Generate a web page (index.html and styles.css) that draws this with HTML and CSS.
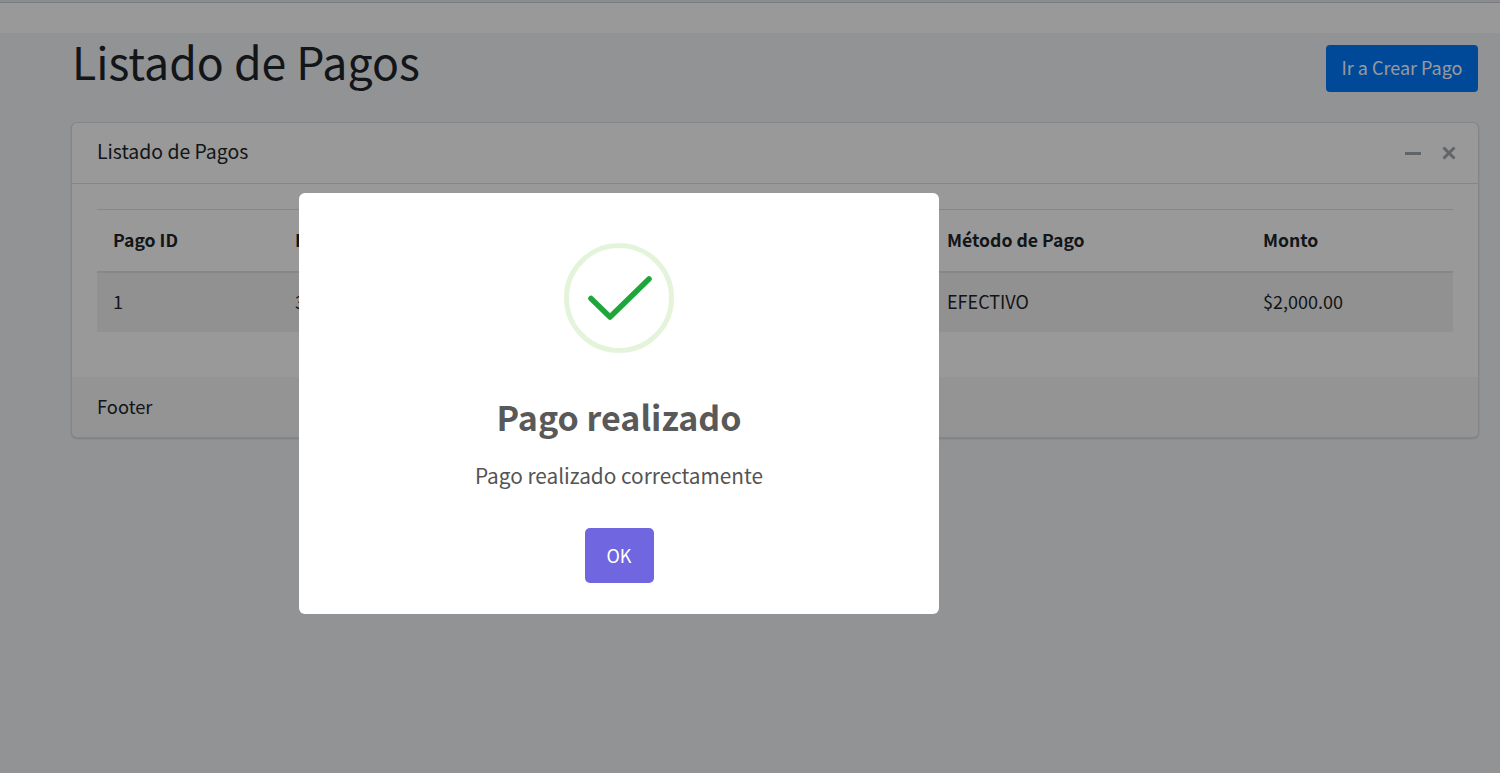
FILE: index.html
```html
<!DOCTYPE html>
<html lang="es">
<head>
  <meta charset="UTF-8">
  <meta name="viewport" content="width=device-width, initial-scale=1.0">
  <title>Listado de Pagos</title>
  <link rel="stylesheet" href="styles.css">
</head>
<body>

<nav class="topbar"></nav>

<main class="content">
  <div class="page-head">
    <h1>Listado de Pagos</h1>
    <a class="btn-primary" href="#">Ir a Crear Pago</a>
  </div>

  <section class="card">
    <div class="card-header">
      <h3 class="card-title">Listado de Pagos</h3>
      <div class="card-tools">
        <svg class="tool-icon" viewBox="0 0 16 16" width="16" height="16">
          <path d="M0 7h16v3H0z"/>
        </svg>
        <svg class="tool-icon" viewBox="0 0 16 16" width="16" height="16">
          <path d="M2.500 2.500l11 11M13.500 2.500l-11 11" stroke-width="3"/>
        </svg>
      </div>
    </div>
    <div class="card-body">
      <table class="pagos">
        <colgroup>
          <col class="col-id">
          <col class="col-factura">
          <col class="col-metodo">
          <col class="col-monto">
        </colgroup>
        <thead>
          <tr>
            <th>Pago ID</th>
            <th>Factura</th>
            <th>Método de Pago</th>
            <th>Monto</th>
          </tr>
        </thead>
        <tbody>
          <tr>
            <td>1</td>
            <td>3</td>
            <td>EFECTIVO</td>
            <td>$2,000.00</td>
          </tr>
        </tbody>
      </table>
    </div>
    <div class="card-footer">Footer</div>
  </section>
</main>

<div class="overlay">
  <div class="alert">
    <svg class="alert-icon" viewBox="0 0 110 110" width="110" height="110">
      <circle class="ring" cx="55" cy="55" r="52.5"/>
      <path class="check" d="M27 55.500L46 74 85 36"/>
    </svg>
    <h2 class="alert-title">Pago realizado</h2>
    <p class="alert-text">Pago realizado correctamente</p>
    <button class="alert-ok" type="button">OK</button>
  </div>
</div>

</body>
</html>
```

FILE: styles.css
```css
html, body {
  margin: 0;
  padding: 0;
  height: 100%;
}
body {
  background-color: #f4f6f9;
  color: #212529;
  font-family: "Noto Sans CJK SC", "Noto Sans", sans-serif;
  font-size: 18px;
  overflow: hidden;
}

.topbar {
  height: 31px;
  background-color: #fff;
  border-top: 2px solid #e6e9ec;
  box-shadow: inset 0 1px 0 #c8ced4;
}

.content {
  padding: 0 22px 0 72px;
}
.page-head {
  display: flex;
  justify-content: space-between;
  align-items: flex-start;
  height: 89px;
  padding-top: 12px;
  box-sizing: border-box;
}
h1 {
  margin: 0;
  font-size: 44.6px;
  font-weight: 400;
  line-height: 32px;
}
.btn-primary {
  background-color: #007bff;
  border-radius: 4px;
  box-sizing: border-box;
  color: #fff;
  font-size: 18px;
  height: 47px;
  line-height: 44px;
  text-align: center;
  text-decoration: none;
  width: 152px;
}

.card {
  margin: 0 -1px;
  background-color: #fff;
  border: 1px solid rgba(0, 0, 0, .125);
  border-radius: 6px;
  box-shadow: 0 1px 2px rgba(0, 0, 0, .15);
}
.card-header {
  display: flex;
  justify-content: space-between;
  align-items: center;
  height: 60px;
  padding: 0 21px 0 25px;
  border-bottom: 1px solid rgba(0, 0, 0, .125);
}
.card-title {
  margin: 0 0 4px;
  font-size: 19.4px;
  font-weight: 400;
  line-height: 24px;
}
.card-tools {
  display: flex;
  gap: 20px;
}
.tool-icon {
  fill: #a0a8b0;
  stroke: #a0a8b0;
  stroke-width: 0;
}
.card-body {
  padding: 25px 25px 45px;
}
.card-footer {
  height: 60px;
  padding: 0 25px;
  line-height: 58px;
  font-size: 18.3px;
  background-color: rgba(0, 0, 0, .03);
  border-radius: 0 0 6px 6px;
}

.pagos {
  width: 100%;
  border-collapse: collapse;
  table-layout: fixed;
  font-size: 18px;
}
.col-id { width: 182px; }
.col-factura { width: 652px; }
.col-metodo { width: 316px; }
.pagos th, .pagos td {
  box-sizing: border-box;
  padding: 0 16px;
  text-align: left;
}
.pagos th {
  height: 62px;
  padding-bottom: 2px;
  font-size: 17.6px;
  border-top: 1px solid #dee2e6;
  border-bottom: 2px solid #dee2e6;
}
.pagos td {
  height: 60px;
  padding-bottom: 2px;
  background-color: rgba(0, 0, 0, .05);
}

.overlay {
  position: fixed;
  top: 0;
  left: 0;
  right: 0;
  bottom: 0;
  background-color: rgba(0, 0, 0, .4);
}
.alert {
  position: absolute;
  top: 193px;
  left: 299px;
  width: 640px;
  height: 421px;
  box-sizing: border-box;
  padding-top: 50px;
  background-color: #fff;
  border-radius: 6px;
  text-align: center;
  color: #545454;
}
.alert-icon {
  display: block;
  margin: 0 auto;
}
.ring {
  fill: none;
  stroke: #a5dc86;
  stroke-opacity: .3;
  stroke-width: 5;
}
.check {
  fill: none;
  stroke: #1ea63a;
  stroke-width: 5.5;
  stroke-linecap: round;
  stroke-linejoin: round;
}
.alert-title {
  margin: 39px 0 0;
  font-size: 34px;
  font-weight: 700;
  line-height: 50px;
  color: #595959;
}
.alert-text {
  margin: 18px 0 0;
  font-size: 20.8px;
  line-height: 30px;
}
.alert-ok {
  display: block;
  margin: 38px auto 0;
  width: 69px;
  height: 55px;
  padding: 0 0 2px;
  border: 0;
  border-radius: 5px;
  background-color: #7066e0;
  color: #fff;
  font-family: inherit;
  font-size: 18px;
}
```
